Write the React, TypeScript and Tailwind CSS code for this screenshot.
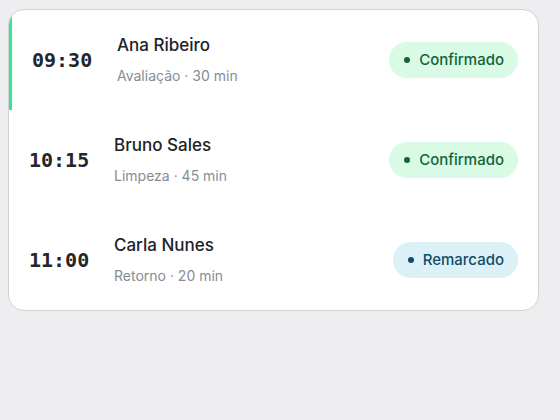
const rows = [
  {
    id: 1,
    time: "09:30",
    name: "Ana Ribeiro",
    detail: "Avaliação · 30 min",
    status: "Confirmado",
    tone: "green",
    active: true,
  },
  {
    id: 2,
    time: "10:15",
    name: "Bruno Sales",
    detail: "Limpeza · 45 min",
    status: "Confirmado",
    tone: "green",
    active: false,
  },
  {
    id: 3,
    time: "11:00",
    name: "Carla Nunes",
    detail: "Retorno · 20 min",
    status: "Remarcado",
    tone: "blue",
    active: false,
  },
];

function Badge({ label, tone }: { label: string; tone: string }) {
  const green = tone === "green";
  return (
    <span
      className={
        green
          ? "flex items-center gap-[9px] h-9 pl-[15px] pr-[14px] rounded-full bg-[#d9fbe6] text-[#12633a]"
          : "flex items-center gap-[9px] h-9 pl-[15px] pr-[14px] rounded-full bg-[#dcf0f8] text-[#0e4d66]"
      }
    >
      <span
        className={
          green
            ? "w-[6px] h-[6px] rounded-full bg-[#12633a]"
            : "w-[6px] h-[6px] rounded-full bg-[#0e4d66]"
        }
      />
      <span className="text-[15px] font-medium">{label}</span>
    </span>
  );
}

export default function App() {
  return (
    <div className="min-h-[420px] bg-[#eeeef0] pt-[9px] pl-[8px] font-['Inter',sans-serif]">
      <div className="w-[531px] rounded-[16px] border border-[#cfd2d6] bg-white overflow-hidden">
        {rows.map((row) => (
          <div
            key={row.id}
            className={
              row.active
                ? "flex items-center h-[100px] pl-[20px] pr-[20px] border-l-[3px] border-[#36e68c]"
                : "flex items-center h-[100px] pl-[20px] pr-[20px]"
            }
          >
            <span className="w-[64px] font-['DejaVu_Sans_Mono',monospace] font-bold text-[20px] text-[#23262b]">
              {row.time}
            </span>
            <div className="flex flex-col gap-[11px] pb-[2px] ml-[21px] flex-1">
              <span className="text-[17px] font-medium text-[#202328] leading-[22px]">
                {row.name}
              </span>
              <span className="text-[14px] text-[#878c94] leading-[18px]">
                {row.detail}
              </span>
            </div>
            <Badge label={row.status} tone={row.tone} />
          </div>
        ))}
      </div>
    </div>
  );
}
